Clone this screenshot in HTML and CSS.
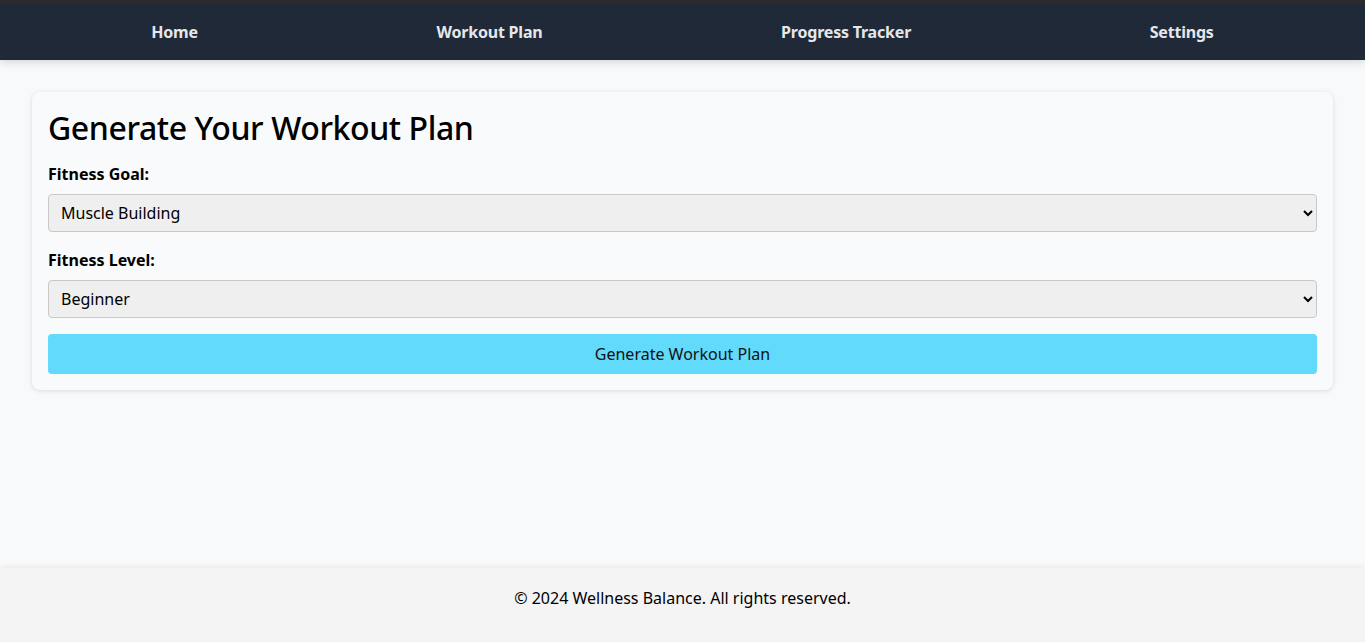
FILE: index.html
```html
<!DOCTYPE html>
<html lang="en">
<head>
<meta charset="utf-8">
<title>Wellness Balance - Workout Plan</title>
<link rel="stylesheet" href="styles.css">
</head>
<body>
<header class="site-header">
  <nav class="nav">
    <a class="nav-link" href="#">Home</a>
    <a class="nav-link" href="#">Workout Plan</a>
    <a class="nav-link" href="#">Progress Tracker</a>
    <a class="nav-link" href="#">Settings</a>
  </nav>
</header>
<main class="main">
  <section class="card">
    <h1 class="card-title">Generate Your Workout Plan</h1>
    <form class="form">
      <label class="field-label" for="goal">Fitness Goal:</label>
      <select class="field-select" id="goal">
        <option>Muscle Building</option>
        <option>Weight Loss</option>
        <option>Endurance</option>
      </select>
      <label class="field-label" for="level">Fitness Level:</label>
      <select class="field-select" id="level">
        <option>Beginner</option>
        <option>Intermediate</option>
        <option>Advanced</option>
      </select>
      <button class="btn-generate" type="button">Generate Workout Plan</button>
    </form>
  </section>
</main>
<footer class="footer">
  <p class="footer-text">© 2024 Wellness Balance. All rights reserved.</p>
</footer>
</body>
</html>
```

FILE: styles.css
```css
* { box-sizing: border-box; }
html, body { margin: 0; padding: 0; }
body {
  font-family: "Noto Sans", "Open Sans", sans-serif;
  background: #f8f9fa;
  color: #000;
  min-height: 100vh;
  display: flex;
  flex-direction: column;
}
.site-header {
  background: #1f2937;
  border-top: 3px solid #2b2b2b;
  box-shadow: 0 2px 8px rgba(0,0,0,0.15);
  position: relative;
  z-index: 1;
}
.nav {
  height: 57px;
  display: flex;
  align-items: center;
  justify-content: space-around;
  padding: 0 32px;
}
.nav-link {
  color: #e5e7eb;
  text-decoration: none;
  font-weight: 700;
  font-size: 16px;
  letter-spacing: -0.2px;
}
.main {
  flex: 1;
  padding: 32px;
}
.card {
  background: #f9fafb;
  border-radius: 8px;
  box-shadow: 0 1px 5px rgba(0,0,0,0.12);
  padding: 16px;
}
.card-title {
  font-size: 32px;
  font-weight: 500;
  margin: 0 0 14px;
  line-height: 40px;
  letter-spacing: -0.4px;
}
.form {
  display: flex;
  flex-direction: column;
}
.field-label {
  font-weight: 700;
  font-size: 16px;
  line-height: 20px;
  margin: 2px 0 10px;
}
.field-select {
  height: 38px;
  font-family: inherit;
  font-size: 16px;
  padding: 0 8px;
  background: #efefef;
  border: 1px solid #c8c8c8;
  border-radius: 4px;
  color: #000;
  margin-bottom: 16px;
}
.btn-generate {
  height: 40px;
  background: #61dafb;
  border: none;
  border-radius: 4px;
  font-family: inherit;
  font-size: 16px;
  color: #111;
}
.footer {
  background: #f4f4f4;
  height: 74px;
  padding-top: 20px;
  box-shadow: 0 -2px 5px rgba(0,0,0,0.06);
  text-align: center;
}
.footer-text {
  margin: 0;
  font-size: 16px;
  line-height: 20px;
}
```
